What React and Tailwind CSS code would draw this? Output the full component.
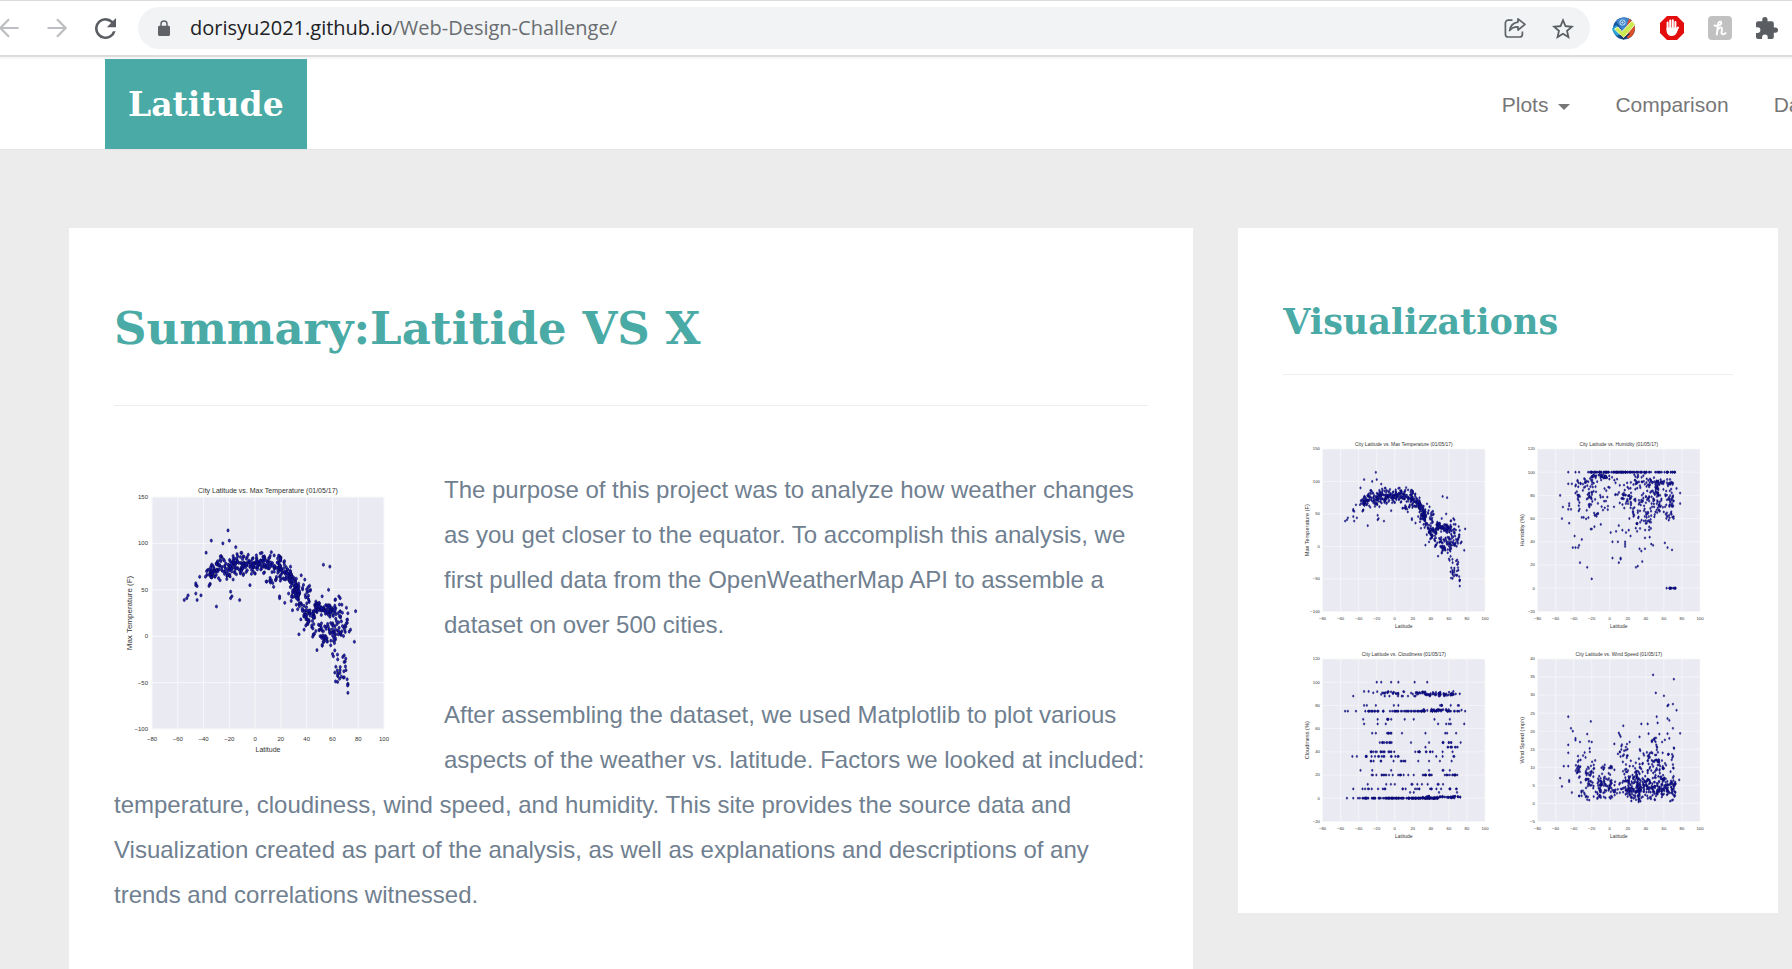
import React from "react";

/* ---------- chart data ---------- */

function makeRandom(seed) {
  let s = seed;
  return () => {
    s = (s * 1664525 + 1013904223) % 4294967296;
    return s / 4294967296;
  };
}

// Each band is [latFrom, latTo, count, valueFrom, valueTo, spread].
function scatter(seed, bands, singles) {
  const rnd = makeRandom(seed);
  const points = singles.slice();
  bands.forEach(([a, b, n, v0, v1, spread]) => {
    for (let i = 0; i < n; i++) {
      const t = rnd();
      const noise = (rnd() + rnd() - 1) * spread;
      points.push([a + (b - a) * t, v0 + (v1 - v0) * t + noise]);
    }
  });
  return points;
}

const temperature = {
  title: "City Latitude vs. Max Temperature (01/05/17)",
  label: "Max Temperature (F)",
  min: -100,
  max: 150,
  step: 50,
  points: scatter(
    7,
    [
      [-39, -30, 28, 62, 72, 13],
      [-35, -32, 10, 69, 71, 12],
      [-30, -15, 62, 74, 78, 15],
      [-15, 20, 160, 79, 79, 13],
      [-22, -8, 22, 68, 66, 11],
      [7, 20, 14, 60, 60, 9],
      [19, 29, 54, 74, 64, 15],
      [27, 34, 42, 62, 48, 19],
      [31, 35, 28, 46, 42, 19],
      [34, 43, 46, 45, 32, 27],
      [38, 48, 30, 20, 24, 12],
      [46, 60, 70, 31, 28, 9],
      [43, 50, 12, 8, 12, 14],
      [50, 63, 50, 3, 0, 18],
      [60, 72, 34, 24, 20, 19],
      [60, 71, 18, 5, 2, 15],
      [60, 71, 12, -20, -28, 12],
      [61, 72, 18, -40, -46, 11],
    ],
    [
      [-21, 114], [-34, 103], [-25, 100], [-20, 103], [-15, 96], [-38, 90],
      [53, 77], [58, 75], [57, 50], [78, 27], [77, -6], [72, -61], [72, -52],
      [34, 2], [38, 7], [48, -15], [-30, 32], [-55, 39], [-52, 44], [-53, 41],
      [-46, 46], [-45, 39], [-42, 44], [-46, 55], [-46, 57], [-45, 54],
      [-43, 64], [-19, 48], [-18, 43], [-19, 41], [-12, 39], [23, 36],
      [19, 43], [19, 41], [-4, 55], [52, 43], [65, 43], [66, 41], [62, 39],
      [74, 7], [73, 5], [43, 50], [26, 46], [28, 38], [29, 28],
    ]
  ),
};

const humidity = {
  title: "City Latitude vs. Humidity (01/05/17)",
  label: "Humidity (%)",
  min: -20,
  max: 120,
  step: 20,
  points: scatter(
    21,
    [
      [-24, 34, 85, 100, 100, 0],
      [34, 73, 36, 100, 100, 0],
      [-20, 4, 30, 96, 96, 3],
      [-38, -15, 28, 91, 90, 9],
      [-36, -33, 12, 80, 80, 20],
      [-27, -19, 26, 78, 78, 19],
      [-18, 0, 22, 80, 80, 20],
      [4, 24, 36, 82, 80, 18],
      [18, 30, 22, 72, 72, 15],
      [24, 56, 40, 92, 92, 7],
      [30, 50, 46, 77, 75, 22],
      [50, 54, 20, 86, 86, 8],
      [52, 70, 28, 91, 91, 4],
      [53, 71, 42, 77, 76, 10],
      [28, 46, 36, 60, 58, 21],
      [46, 60, 20, 70, 69, 11],
      [60, 71, 14, 63, 61, 8],
      [-18, -12, 7, 64, 64, 4],
      [66, 73, 14, 0, 0, 0],
    ],
    [
      [-46, 100], [-38, 100], [-34, 100], [-46, 90], [-42, 90], [-38, 88],
      [-55, 80], [-38, 82], [-52, 70], [-45, 73], [-45, 71], [-46, 68],
      [-43, 68], [-53, 60], [-45, 56], [-31, 61], [-29, 61], [-17, 53],
      [-21, 51], [-20, 51], [-10, 55], [-39, 45], [-31, 42], [-41, 35],
      [-38, 35], [-35, 35], [-34, 37], [-33, 22], [-25, 18], [-20, 8],
      [1, 48], [3, 40], [9, 40], [17, 40], [17, 36], [17, 38], [7, 49],
      [10, 54], [14, 50], [18, 48], [21, 50], [23, 45], [3, 26], [12, 26],
      [12, 25], [10, 22], [29, 18], [31, 19], [36, 23], [33, 34], [35, 32],
      [39, 34], [46, 38], [48, 37], [61, 39], [64, 35], [69, 33], [78, 82],
      [78, 73], [74, 86], [63, 0],
    ]
  ),
};

const cloudiness = {
  title: "City Latitude vs. Cloudiness (01/05/17)",
  label: "Cloudiness (%)",
  min: -20,
  max: 120,
  step: 20,
  points: scatter(
    5,
    [
      [-24, 32, 34, 91, 91, 2],
      [30, 68, 60, 90, 90, 2],
      [-35, 72, 72, 75, 75, 0],
      [30, 62, 26, 76, 76, 1],
      [-12, 50, 10, 88, 88, 0],
      [50, 54, 4, 80, 80, 0],
      [-9, -3, 5, 68, 68, 0],
      [-9, -2, 6, 56, 56, 0],
      [-28, 2, 11, 48, 48, 0],
      [-28, 0, 17, 40, 40, 0],
      [20, 44, 11, 40, 40, 0],
      [-34, 6, 16, 36, 36, 0],
      [-32, 12, 11, 32, 32, 0],
      [-26, 10, 16, 20, 20, 0],
      [30, 42, 11, 20, 20, 0],
      [52, 71, 13, 20, 20, 0],
      [50, 70, 8, 44, 44, 0],
      [52, 70, 7, 48, 48, 0],
      [-36, -10, 9, 8, 8, 0],
      [6, 72, 17, 8, 8, 0],
      [-14, 62, 11, 12, 12, 0],
      [-42, -5, 38, 0, 0, 0],
      [-4, 48, 110, 0, 0, 0],
      [30, 73, 45, 1, 1, 1],
    ],
    [
      [-20, 100], [-15, 100], [-4, 100], [4, 100], [22, 100], [36, 100],
      [-46, 88], [-34, 92], [-29, 92], [65, 92], [72, 90], [-34, 80],
      [-31, 80], [-21, 80], [-1, 80], [4, 80], [62, 80], [70, 80], [71, 80],
      [-55, 75], [-52, 75], [-43, 75], [78, 75], [74, 76], [-35, 68],
      [-19, 68], [11, 68], [21, 68], [44, 68], [61, 68], [-34, 64], [-19, 64],
      [-10, 64], [48, 64], [57, 64], [60, 64], [62, 64], [77, 64], [-25, 56],
      [-21, 56], [8, 56], [34, 56], [56, 56], [58, 56], [68, 56], [18, 48],
      [38, 48], [73, 48], [34, 44], [64, 40], [53, 40], [-47, 36], [-42, 36],
      [46, 36], [53, 36], [65, 36], [66, 36], [26, 32], [38, 32], [50, 32],
      [63, 32], [-38, 24], [-25, 24], [-4, 24], [38, 24], [53, 24], [54, 24],
      [61, 24], [15, 20], [21, 20], [-46, 8], [-30, 12], [17, 5], [21, 5],
      [49, 5], [69, 5], [-53, 0], [-46, 0],
    ]
  ),
};

const wind = {
  title: "City Latitude vs. Wind Speed (01/05/17)",
  label: "Wind Speed (mph)",
  min: -5,
  max: 40,
  step: 5,
  points: scatter(
    13,
    [
      [-14, 2, 76, 4.5, 4.5, 4],
      [2, 18, 26, 4, 4, 3],
      [17, 34, 90, 4.4, 4.2, 4],
      [30, 50, 90, 4.4, 4.2, 4],
      [50, 73, 96, 4.2, 3.7, 3.4],
      [-27, -18, 26, 7.5, 7.5, 3],
      [-38, -15, 20, 4, 3, 3],
      [-36, -32, 14, 9, 9, 7],
      [-38, -14, 22, 11, 11, 6],
      [-10, 4, 12, 10, 10, 1],
      [5, 20, 24, 13, 12, 6],
      [18, 30, 20, 8, 8, 4],
      [28, 45, 34, 10, 9, 8],
      [42, 60, 48, 11, 11, 8],
      [50, 60, 18, 9, 9, 5],
      [58, 72, 26, 10, 10, 8],
      [46, 52, 8, 17, 18, 1],
    ],
    [
      [-46, 24], [-21, 22.7], [-43, 20.8], [-41, 20], [-38, 18], [-38, 17.5],
      [-25, 19.2], [-23, 17.2], [-20, 17], [-33, 17], [-46, 16.2], [-46, 14],
      [-51, 10.3], [-46, 10.3], [-55, 7], [-53, 4.7], [-45, 6], [-45, 6.4],
      [-42, 3], [10, 19.5], [11, 19], [12, 18.5], [15, 21.5], [22, 17],
      [33, 18.4], [35, 22], [42, 22], [43, 19.3], [48, 35.6], [51, 30.6],
      [60, 29.8], [71, 34.4], [64, 27], [65, 27.3], [70, 27.5], [74, 25.8],
      [52, 24], [53, 22.3], [64, 23.5], [66, 23], [70, 20.8], [55, 19.2],
      [64, 19.3], [66, 18], [78, 19.4], [77, 6.5], [58, 17], [71, 15.4],
      [32, 0.4], [34, 0.6], [67, 0.6], [70, 1],
    ]
  ),
};

/* ---------- chart ---------- */

const LEFT = 38;
const TOP = 30;
const SIZE = 232;
const LATS = [-80, -60, -40, -20, 0, 20, 40, 60, 80, 100];

function ScatterPlot({ data, className }) {
  const x = (lat) => LEFT + ((lat + 80) / 180) * SIZE;
  const y = (v) => TOP + ((data.max - v) / (data.max - data.min)) * SIZE;
  const ticks = [];
  for (let v = data.min; v <= data.max; v += data.step) ticks.push(v);
  const name = (v) => String(v).replace("-", "−");

  return (
    <svg viewBox="0 0 300 300" role="img" aria-label={data.title} className={className}>
      <rect x={LEFT} y={TOP} width={SIZE} height={SIZE} fill="#eaeaf2" />
      <g stroke="#f8f8fb" strokeWidth="1">
        {LATS.map((l) => (
          <line key={l} x1={x(l)} x2={x(l)} y1={TOP} y2={TOP + SIZE} />
        ))}
        {ticks.map((v) => (
          <line key={v} x1={LEFT} x2={LEFT + SIZE} y1={y(v)} y2={y(v)} />
        ))}
      </g>
      <g fill="#1414b8" stroke="#08084a" strokeWidth="0.7" strokeOpacity="0.8">
        {data.points.map(([l, v], i) => (
          <ellipse key={i} cx={x(l)} cy={y(v)} rx="1.1" ry="1.6" fillOpacity="0.9" />
        ))}
      </g>
      <g fill="#333" className="font-['Liberation_Sans',sans-serif]">
        <text x="154" y="26" fontSize="7" textAnchor="middle">{data.title}</text>
        <g fontSize="6" textAnchor="middle">
          {LATS.map((l) => (
            <text key={l} x={x(l)} y="274">{name(l)}</text>
          ))}
        </g>
        <g fontSize="6" textAnchor="end">
          {ticks.map((v) => (
            <text key={v} x="34" y={y(v) + 2}>{name(v)}</text>
          ))}
        </g>
        <text x="154" y="285" fontSize="7" textAnchor="middle">Latitude</text>
        <text transform="translate(18 146) rotate(-90)" fontSize="8" textAnchor="middle">
          {data.label}
        </text>
      </g>
    </svg>
  );
}

/* ---------- browser bar ---------- */

function BackIcon({ flip }) {
  return (
    <svg viewBox="0 0 20 20" className={flip ? "size-5 rotate-180" : "size-5"} fill="none" stroke="#bcbec1" strokeWidth="2.2">
      <path d="M19.5 10H1.8M10 1.2 1.4 10l8.6 8.8" />
    </svg>
  );
}

function ReloadIcon() {
  return (
    <svg viewBox="4 4 16 16" className="size-[21px]" fill="#5a5e63">
      <path d="M17.65 6.35A7.96 7.96 0 0 0 12 4a8 8 0 1 0 7.73 10h-2.08A6 6 0 1 1 12 6c1.66 0 3.14.69 4.22 1.78L13 11h7V4l-2.35 2.35z" />
    </svg>
  );
}

function LockIcon() {
  return (
    <svg viewBox="0 0 12 16" className="h-4 w-3 shrink-0">
      <path d="M3 7V4a3 3 0 0 1 6 0v3" fill="none" stroke="#5f6368" strokeWidth="1.5" />
      <rect x="0" y="5.8" width="12" height="10.2" rx="1.4" fill="#5f6368" />
    </svg>
  );
}

function ShareIcon() {
  return (
    <svg viewBox="0 0 22 22" className="size-[22px]" fill="none" stroke="#5f6368" strokeWidth="1.7" strokeLinejoin="round">
      <path d="M8.5 3.2H4.2A2.8 2.8 0 0 0 1.4 6v11.2A2.8 2.8 0 0 0 4.2 20h11.4a2.8 2.8 0 0 0 2.8-2.8v-2.7" />
      <path d="M14 1.8 21 7.4l-7 5.600V9.800c-3.800-.1-6.400 1-8.400 3.800.6-4.300 3.200-7.800 8.400-8.500z" />
    </svg>
  );
}

function StarIcon() {
  return (
    <svg viewBox="2 2 20 19" className="h-[21px] w-[22px]" fill="#5a5e63">
      <path d="M22 9.240l-7.190-.62L12 2 9.190 8.630 2 9.240l5.460 4.730L5.820 21 12 17.270 18.180 21l-1.630-7.030L22 9.240zM12 15.400l-3.760 2.270 1-4.280-3.320-2.880 4.380-.38L12 6.100l1.710 4.040 4.380.38-3.320 2.880 1 4.280L12 15.400z" />
    </svg>
  );
}

function CheckerIcon() {
  return (
    <svg viewBox="0 0 24 24" className="size-6">
      <circle cx="12" cy="12.5" r="11" fill="#17549c" />
      <path d="M4 5a11 11 0 0 1 16 0L12 17z" fill="#3f86cc" />
      <path d="M17 2.8a11 11 0 0 1-1 20L12 18z" fill="#d8502a" />
      <path d="M0 12.5 4.5 9l4 6.5-3 4.5A11 11 0 0 1 0 12.5z" fill="#2aa6d8" />
      <circle cx="10.5" cy="6.5" r="3" fill="#b9daf3" />
      <circle cx="10.5" cy="6.5" r="1.6" fill="none" stroke="#2c6fb8" strokeWidth="1" />
      <path d="M2.5 13 6 11l4 4.500L20 5l3 3.500L11.500 22z" fill="#cdea4e" stroke="#f1f8d0" strokeWidth="1" />
      <path d="M8 19.500 11.500 23l6-5.500" fill="none" stroke="#12315c" strokeWidth="1.2" />
    </svg>
  );
}

function HandIcon() {
  return (
    <svg viewBox="0 0 24 24" className="size-6">
      <path d="M7 0h10l7 7v10l-7 7H7l-7-7V7z" fill="#e40d0d" />
      <g stroke="#fff" strokeWidth="2" strokeLinecap="round" fill="none">
        <path d="M7.6 6.5V14M10.2 4.5V13M12.8 4.2V13M15.4 6V14M18 11.5 15.500 16" />
      </g>
      <path d="M6.6 11.5h9.800v3.500l1.200-1.500c-.4 3-2 6.500-5.800 6.500-3.600 0-5.200-2.600-5.200-5.500z" fill="#fff" />
    </svg>
  );
}

function HoneyIcon() {
  return (
    <svg viewBox="0 0 24 24" className="size-6">
      <rect width="24" height="24" rx="4" fill="#c1c1c1" />
      <path
        d="M6.5 9.500c2.500.8 6.800-.2 6.800-2.800 0-2-2.800-1.300-3.200 1.300L8.800 18.500M9.400 14.500c.8-2.600 4.600-4.300 4.600-1.600 0 1.500-.9 3.200-.4 4.600.5 1.300 2.600.9 4-.4"
        fill="none"
        stroke="#fff"
        strokeWidth="1.9"
        strokeLinecap="round"
      />
    </svg>
  );
}

function PuzzleIcon() {
  return (
    <svg viewBox="2 1 21 21" className="size-[22px]" fill="#5a5e63">
      <path d="M20.500 11H19V7a2 2 0 0 0-2-2h-4V3.500a2.500 2.500 0 0 0-5 0V5H4a2 2 0 0 0-2 2v3.800h1.500a2.700 2.700 0 0 1 0 5.400H2V20a2 2 0 0 0 2 2h3.800v-1.500a2.700 2.700 0 0 1 5.400 0V22H17a2 2 0 0 0 2-2v-4h1.500a2.500 2.500 0 0 0 0-5z" />
    </svg>
  );
}

function BrowserBar() {
  return (
    <div className="flex h-[55px] shrink-0 items-center border-t border-[#dadce0] bg-white pr-[14px]">
      <div className="flex items-center gap-7">
        <button aria-label="Back" className="-ml-px"><BackIcon /></button>
        <button aria-label="Forward"><BackIcon flip /></button>
        <button aria-label="Reload"><ReloadIcon /></button>
      </div>
      <div className="ml-[22px] flex h-[42px] min-w-0 flex-1 items-center rounded-full bg-[#f1f3f4] pr-4 pl-5">
        <LockIcon />
        <p className="ml-5 flex-1 truncate font-['Open_Sans','Noto_Sans',sans-serif] text-[20px] leading-7 text-[#696d71]">
          <span className="text-[#202124]">dorisyu2021.github.io</span>/Web-Design-Challenge/
        </p>
        <div className="flex items-center gap-[26px]">
          <button aria-label="Share"><ShareIcon /></button>
          <button aria-label="Bookmark this tab"><StarIcon /></button>
        </div>
      </div>
      <div className="ml-[22px] flex items-center gap-6">
        <button aria-label="Checker"><CheckerIcon /></button>
        <button aria-label="Blocker"><HandIcon /></button>
        <button aria-label="Honey"><HoneyIcon /></button>
        <button aria-label="Extensions"><PuzzleIcon /></button>
      </div>
    </div>
  );
}

/* ---------- page ---------- */

function SiteNav() {
  return (
    <nav className="flex h-[91px] shrink-0 items-stretch justify-between overflow-hidden border-b border-[#e4e4e4] bg-white pl-[105px]">
      <a
        href="#home"
        className="flex items-center bg-[#4aaaa5] px-[23px] font-['DejaVu_Serif',serif] text-[33px] leading-none font-bold text-white"
      >
        Latitude
      </a>
      <div className="-mr-[26px] flex items-center gap-[45px] pt-[2px] text-[21px] text-[#777]">
        <button className="flex items-center gap-[10px]">
          Plots
          <span className="mt-1 border-x-[6px] border-t-[6px] border-x-transparent border-t-[#777]" />
        </button>
        <a href="#comparison">Comparison</a>
        <a href="#data">Data</a>
      </div>
    </nav>
  );
}

export default function App() {
  return (
    <div className="flex h-screen flex-col overflow-hidden bg-[#ececec] font-['Liberation_Sans',Arial,sans-serif]">
      <BrowserBar />
      <div className="h-1 shrink-0 border-t-2 border-[#dcdcdc] bg-[#f6f6f6]" />
      <SiteNav />
      <main className="grid flex-1 grid-cols-[minmax(0,25fr)_minmax(0,12fr)] gap-[45px] pt-[78px] pr-[14px] pl-[69px]">
        <section className="bg-white px-[45px] pt-[71px]">
          <h1 className="font-['DejaVu_Serif',serif] text-[45px] leading-[60px] font-bold text-[#4aaaa5]">
            Summary:Latitide VS X
          </h1>
          <hr className="mt-[46px] mb-[61px] border-[#eee]" />
          <div className="text-[24px] leading-[45px] text-[#708090]">
            <ScatterPlot data={temperature} className="float-left mr-[30px] size-[300px]" />
            <p className="mb-[45px]">
              The purpose of this project was to analyze how weather changes as you get closer to the equator. To
              accomplish this analysis, we first pulled data from the OpenWeatherMap API to assemble a dataset on over
              500 cities.
            </p>
            <p>
              After assembling the dataset, we used Matplotlib to plot various aspects of the weather vs. latitude.
              Factors we looked at included: temperature, cloudiness, wind speed, and humidity. This site provides the
              source data and Visualization created as part of the analysis, as well as explanations and descriptions of
              any trends and correlations witnessed.
            </p>
          </div>
        </section>
        <section className="self-start bg-white px-[45px] pt-[71px] pb-[65px]">
          <h2 className="font-['DejaVu_Serif',serif] text-[35px] leading-[46px] font-bold text-[#4aaaa5]">
            Visualizations
          </h2>
          <hr className="mt-[29px] mb-[53px] border-[#eee]" />
          <div className="flex flex-wrap justify-center gap-x-[5px]">
            {[temperature, humidity, cloudiness, wind].map((d) => (
              <a key={d.title} href="#plot" aria-label={d.title}>
                <ScatterPlot data={d} className="size-[210px]" />
              </a>
            ))}
          </div>
        </section>
      </main>
    </div>
  );
}
